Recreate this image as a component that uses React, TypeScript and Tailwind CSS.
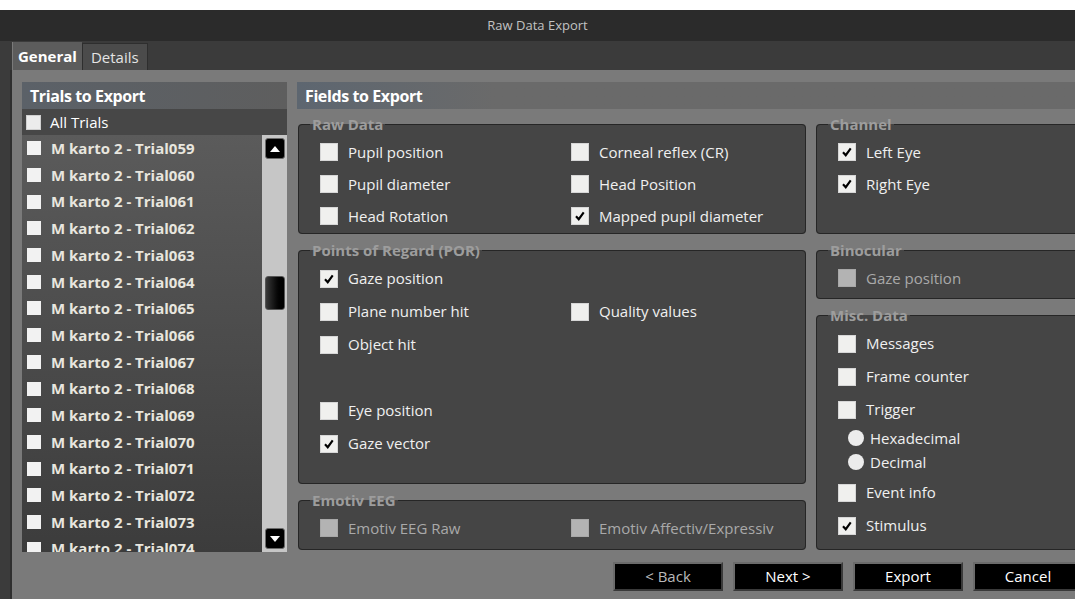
import React from "react";

const trials = Array.from({ length: 16 }, (_, i) => `M karto 2 - Trial0${59 + i}`);

function Check({ checked = false, disabled = false }: { checked?: boolean; disabled?: boolean }) {
  return (
    <span
      className={`flex h-[18px] w-[18px] shrink-0 items-center justify-center border ${
        disabled ? "border-[#a8a8a8] bg-[#b3b3b3]" : "border-[#d6d6d6] bg-[#f0f0ee]"
      }`}
    >
      {checked && (
        <svg viewBox="0 0 18 18" className="h-[16px] w-[16px]">
          <path d="M4.5 9.2 L7.6 12.6 L13.2 5" fill="none" stroke="#000" strokeWidth="2.4" />
        </svg>
      )}
    </span>
  );
}

function Field({
  label,
  checked,
  disabled,
  tall = false,
}: {
  label: string;
  checked?: boolean;
  disabled?: boolean;
  tall?: boolean;
}) {
  return (
    <div className={`flex items-center gap-[10px] ${tall ? "h-[33px]" : "h-[32px]"}`}>
      <Check checked={checked} disabled={disabled} />
      <span className={`whitespace-nowrap text-[15px] ${disabled ? "text-[#a9a9a9]" : "text-[#f0f0f0]"}`}>
        {label}
      </span>
    </div>
  );
}

function Radio({ label }: { label: string }) {
  return (
    <div className="flex h-[24px] items-center gap-[6px] pl-[10px]">
      <span className="h-[16px] w-[16px] shrink-0 rounded-full bg-[#ececec]" />
      <span className="text-[15px] text-[#f0f0f0]">{label}</span>
    </div>
  );
}

function Group({
  title,
  className,
  children,
}: {
  title: string;
  className: string;
  children: React.ReactNode;
}) {
  return (
    <fieldset className={`rounded-[4px] border border-[#262626] bg-[#454545] pl-[21px] pt-[4px] ${className}`}>
      <legend className="ml-[-10px] px-[2px] text-[15px] leading-[16px] font-bold text-[#9d9d9d]">{title}</legend>
      {children}
    </fieldset>
  );
}

function ArrowButton({ down = false }: { down?: boolean }) {
  return (
    <div className="mx-auto flex h-[21px] w-[20px] items-center justify-center rounded-[3px] border border-[#6a6a6a] bg-black">
      <svg viewBox="0 0 10 6" className="h-[6px] w-[10px]">
        <path d={down ? "M0 0 L10 0 L5 6 Z" : "M0 6 L10 6 L5 0 Z"} fill="#fff" />
      </svg>
    </div>
  );
}

function DialogButton({ label, dim = false }: { label: string; dim?: boolean }) {
  return (
    <button className="h-[29px] w-[110px] border-2 border-t-[#6b6b6b] border-l-[#6b6b6b] border-r-[#3a3a3a] border-b-[#3a3a3a] bg-black text-[15px]">
      <span className={dim ? "text-[#b9b9b9]" : "text-white"}>{label}</span>
    </button>
  );
}

export default function App() {
  return (
    <div className="h-[599px] w-[1075px] overflow-hidden bg-white pt-[10px] font-['Open_Sans',sans-serif]">
      <div className="flex h-[589px] w-[1085px] flex-col">
        {/* title bar */}
        <div className="flex h-[31px] shrink-0 items-center justify-center bg-[#2b2b2b] pr-[10px] text-[13px] text-[#c2c2c2]">
          Raw Data Export
        </div>

        {/* tabs */}
        <div className="flex h-[29px] shrink-0 items-end bg-[#3b3b3b] pl-[12px]">
          <div className="flex h-[28px] items-center border-l border-[#7a7a7a] bg-[#5c5c5c] px-[5px] text-[15px] font-bold text-white">
            General
          </div>
          <div className="flex h-[27px] items-center border border-b-0 border-[#2e2e2e] bg-[#4b4b4b] px-[8px] text-[15px] text-[#e4e4e4]">
            Details
          </div>
        </div>

        <div className="flex flex-1">
          <div className="w-[12px] shrink-0 border-r-2 border-[#2f2f2f] bg-[#3b3b3b]" />

          <div className="flex flex-1 flex-col bg-[#7a7a7a] pl-[10px] pr-[2px] pt-[12px]">
            <div className="flex h-[470px] gap-[10px]">
              {/* trials list */}
              <div className="flex w-[265px] shrink-0 flex-col">
                <div className="flex h-[27px] items-center bg-linear-to-r from-[#5b6168] to-[#5e5e5e] pl-[8px] text-[16px] font-bold tracking-[-0.4px] text-white">
                  Trials to Export
                </div>
                <div className="flex h-[26px] items-center gap-[9px] bg-[#474747] pl-[4px] text-[15px] text-white">
                  <span className="h-[15px] w-[15px] border border-[#d0d0d0] bg-[#ececec]" />
                  All Trials
                </div>
                <div className="flex flex-1 overflow-hidden">
                  <div className="flex-1 overflow-hidden bg-linear-to-b from-[#5b5b5b] to-[#3c3c3c]">
                    {trials.map((t) => (
                      <div key={t} className="flex h-[26.7px] items-center gap-[10px] pl-[5px]">
                        <span className="h-[14px] w-[14px] shrink-0 bg-[#f2f2f2]" />
                        <span className="whitespace-nowrap text-[15px] font-bold text-[#e8e6df]">{t}</span>
                      </div>
                    ))}
                  </div>
                  <div className="flex w-[25px] flex-col bg-[#c6c6c6] py-[3px]">
                    <ArrowButton />
                    <div className="h-[117px]" />
                    <div className="mx-auto h-[34px] w-[20px] rounded-[3px] border border-[#555] bg-linear-to-r from-[#3a3a3a] to-black" />
                    <div className="flex-1" />
                    <ArrowButton down />
                  </div>
                </div>
              </div>

              {/* fields */}
              <div className="flex flex-1 flex-col">
                <div className="flex h-[27px] items-center bg-linear-to-r from-[#5d6670] via-[#6a6a6a] via-25% to-[#6a6a6a] pl-[8px] text-[16px] font-bold tracking-[-0.4px] text-white">
                  Fields to Export
                </div>
                <div className="flex gap-[10px] pl-[1px] pt-[7px]">
                  <div className="flex w-[508px] shrink-0 flex-col gap-[8px]">
                    <Group title="Raw Data" className="h-[118px]">
                      <div className="grid grid-cols-[251px_1fr]">
                        <Field label="Pupil position" />
                        <Field label="Corneal reflex (CR)" />
                        <Field label="Pupil diameter" />
                        <Field label="Head Position" />
                        <Field label="Head Rotation" />
                        <Field label="Mapped pupil diameter" checked />
                      </div>
                    </Group>
                    <Group title="Points of Regard (POR)" className="h-[242px]">
                      <div className="grid grid-cols-[251px_1fr]">
                        <Field label="Gaze position" checked tall />
                        <div />
                        <Field label="Plane number hit" tall />
                        <Field label="Quality values" tall />
                        <Field label="Object hit" tall />
                        <div />
                        <div className="h-[33px]" />
                        <div />
                        <Field label="Eye position" tall />
                        <div />
                        <Field label="Gaze vector" checked tall />
                      </div>
                    </Group>
                    <Group title="Emotiv EEG" className="h-[58px]">
                      <div className="grid grid-cols-[251px_1fr]">
                        <Field label="Emotiv EEG Raw" disabled />
                        <div className="overflow-hidden">
                          <Field label="Emotiv Affectiv/Expressiv" disabled />
                        </div>
                      </div>
                    </Group>
                  </div>

                  <div className="flex flex-1 flex-col gap-[8px]">
                    <Group title="Channel" className="h-[118px]">
                      <Field label="Left Eye" checked />
                      <Field label="Right Eye" checked />
                    </Group>
                    <Group title="Binocular" className="h-[57px]">
                      <Field label="Gaze position" disabled />
                    </Group>
                    <Group title="Misc. Data" className="h-[243px]">
                      <Field label="Messages" tall />
                      <Field label="Frame counter" tall />
                      <Field label="Trigger" tall />
                      <Radio label="Hexadecimal" />
                      <Radio label="Decimal" />
                      <div className="h-[2px]" />
                      <Field label="Event info" tall />
                      <Field label="Stimulus" checked tall />
                    </Group>
                  </div>
                </div>
              </div>
            </div>

            {/* dialog buttons */}
            <div className="mt-[10px] flex justify-end gap-[10px]">
              <DialogButton label="< Back" dim />
              <DialogButton label="Next >" />
              <DialogButton label="Export" />
              <DialogButton label="Cancel" />
            </div>
          </div>
        </div>
      </div>
    </div>
  );
}
